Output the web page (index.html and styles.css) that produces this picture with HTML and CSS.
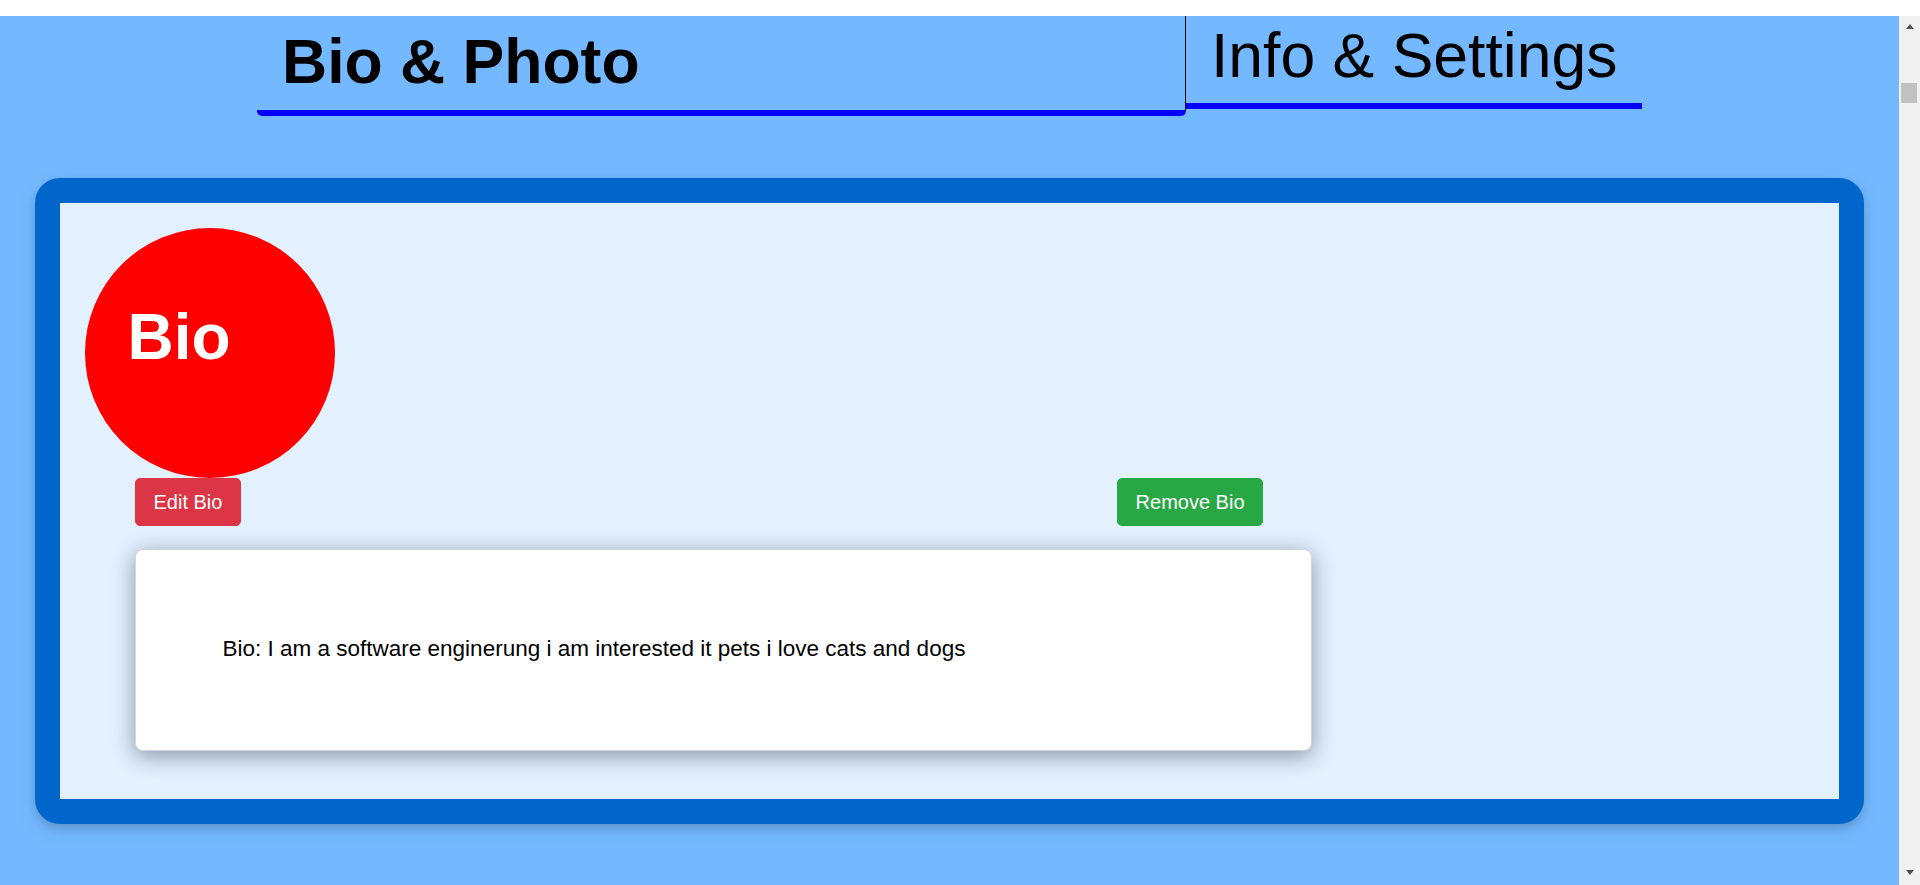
FILE: index.html
```html
<!DOCTYPE html>
<html lang="en">
<head>
<meta charset="utf-8">
<title>Profile</title>
<link rel="stylesheet" href="styles.css">
</head>
<body>
<div class="frame">
  <main class="page">
    <nav class="tabs">
      <div class="tab tab-active">Bio &amp; Photo</div>
      <div class="tab tab-other">Info &amp; Settings</div>
    </nav>
    <section class="panel">
      <div class="panel-inner">
        <div class="bio-circle">Bio</div>
        <div class="btn-row">
          <button class="btn btn-red">Edit Bio</button>
          <button class="btn btn-green">Remove Bio</button>
        </div>
        <div class="bio-card">
          <p class="bio-text">Bio: I am a software enginerung i am interested it pets i love cats and dogs</p>
        </div>
      </div>
    </section>
  </main>
  <div class="scrollbar">
    <div class="sb-btn"><span class="tri-up"></span></div>
    <div class="sb-thumb"></div>
    <div class="sb-track"></div>
    <div class="sb-btn"><span class="tri-down"></span></div>
  </div>
</div>
</body>
</html>
```
FILE: styles.css
```css
html, body {
  margin: 0;
  padding: 0;
  background: #ffffff;
  font-family: "Liberation Sans", Arial, sans-serif;
}

.frame {
  margin-top: 16px;
  height: 869px;
  display: flex;
  overflow: hidden;
}

.page {
  flex: 1;
  background: #74b9ff;
  overflow: hidden;
}

.tabs {
  display: flex;
  justify-content: center;
  align-items: flex-start;
}

.tab {
  font-size: 62.5px;
  line-height: 72px;
  color: #000;
  box-sizing: border-box;
  white-space: nowrap;
}

.tab-active {
  width: 929px;
  font-weight: bold;
  padding: 9px 25px 13px 25px;
  border-right: 1px solid #000;
  border-bottom: 6px solid #0000ff;
  border-radius: 0 0 5px 5px;
}

.tab-other {
  width: 456px;
  padding: 3px 0 12px 25px;
  border-bottom: 6px solid #0000ff;
}

.panel {
  margin: 62px 35px 0 35px;
  border: 25px solid #0066cc;
  border-radius: 25px;
  background: #e3f0fe;
  box-shadow: 0 4px 8px rgba(0, 0, 0, 0.12), 0 6px 20px rgba(0, 0, 0, 0.1);
}

.panel-inner {
  height: 596px;
  box-sizing: border-box;
  padding: 25px;
}

.bio-circle {
  width: 250px;
  height: 250px;
  box-sizing: border-box;
  border-radius: 50%;
  background: #ff0000;
  color: #ffffff;
  font-size: 64px;
  font-weight: bold;
  line-height: 74px;
  padding: 72px 0 0 42.5px;
}

.btn-row {
  display: flex;
  justify-content: space-between;
  width: 1128px;
  margin-left: 50px;
}

.btn {
  font-family: "Liberation Sans", Arial, sans-serif;
  font-size: 20px;
  line-height: 30px;
  padding: 8px 17.5px;
  border: 1px solid transparent;
  border-radius: 5px;
  color: #ffffff;
}

.btn-red {
  background: #dc3545;
  border-color: #dc3545;
}

.btn-green {
  background: #28a745;
  border-color: #28a745;
}

.bio-card {
  margin: 23px 0 0 50px;
  width: 1177px;
  height: 202px;
  box-sizing: border-box;
  background: #ffffff;
  border: 1px solid #d0d6de;
  border-radius: 8px;
  box-shadow: 0 5px 22px rgba(25, 35, 55, 0.45);
  padding: 86px 86px 0 86.5px;
}

.bio-text {
  margin: 0;
  font-size: 22.5px;
  line-height: 26px;
  color: #000;
}

.scrollbar {
  width: 21px;
  background: #f1f1f1;
  display: flex;
  flex-direction: column;
}

.sb-btn {
  height: 21px;
  display: flex;
  align-items: center;
  justify-content: center;
}

.tri-up {
  width: 0;
  height: 0;
  border-left: 4.5px solid transparent;
  border-right: 4.5px solid transparent;
  border-bottom: 5px solid #505050;
}

.tri-down {
  width: 0;
  height: 0;
  border-left: 4.5px solid transparent;
  border-right: 4.5px solid transparent;
  border-top: 5px solid #505050;
  margin-top: -5px;
}

.sb-thumb {
  margin: 46px 3px 0 2px;
  height: 20px;
  background: #c1c1c1;
}

.sb-track {
  flex: 1;
}
```
